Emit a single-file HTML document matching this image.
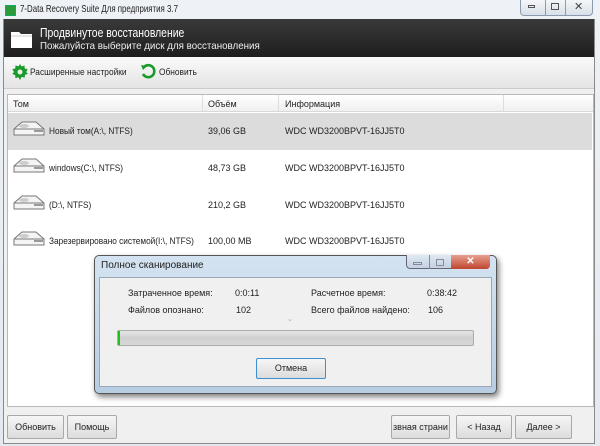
<!DOCTYPE html>
<html><head><meta charset="utf-8"><style>
*{box-sizing:border-box;margin:0;padding:0}
body{width:600px;height:446px;overflow:hidden;background:#dfe6ee;font-family:"Liberation Sans",sans-serif;font-size:11px;color:#222;position:relative}
.a{position:absolute;white-space:nowrap}
.s{transform-origin:0 0}
.btn{position:absolute;border:1px solid #a8a8a8;border-radius:2px;background:linear-gradient(#f6f6f6,#dcdcdc);font-size:9px;text-align:center;line-height:22px;color:#222}
.row{position:absolute;left:8px;width:584px;height:37px;font-size:9px}
.row span{position:absolute;top:13px;white-space:nowrap}
.row span.n{transform:scaleX(.92);transform-origin:0 0}
</style></head><body>
<div class="a" style="left:0;top:0;width:600px;height:446px;background:linear-gradient(#eef2f6,#e3e9ef)"></div>
<div class="a" style="left:5px;top:5px;width:11px;height:11px;background:#2a9a3a;border:1px solid #1a6"></div>
<div class="a s" style="left:20px;top:3px;font-size:10.5px;transform:scaleX(.75)">7-Data Recovery Suite Для предприятия 3.7</div>
<div class="a" style="left:520px;top:0;width:73px;height:16px;border:1px solid #8a9bb0;border-top:none;border-radius:0 0 4px 4px;background:linear-gradient(#f4f6f9,#d9e0e8)"></div>
<div class="a" style="left:545px;top:0;width:1px;height:16px;background:#8a9bb0"></div>
<div class="a" style="left:565px;top:0;width:1px;height:16px;background:#8a9bb0"></div>
<div class="a" style="left:528px;top:5px;width:7px;height:3px;border:1px solid #555"></div>
<div class="a" style="left:551px;top:3px;width:8px;height:7px;border:1px solid #555"></div>
<div class="a" style="left:574px;top:0px;font-size:11px;color:#444">✕</div>
<div class="a" style="left:3px;top:19px;width:592px;height:425px;background:#f0f0f0;border:1px solid #8a8a8a"></div>
<div class="a" style="left:4px;top:19px;width:590px;height:38px;background:linear-gradient(#3a3a3a,#1e1e1e)"></div>
<svg class="a" style="left:10px;top:28px" width="24" height="22"><path d="M1 4h8l2 2h11v14H1z" fill="#fff"/><path d="M1 8h21" stroke="#ccc"/></svg>
<div class="a s" style="left:40px;top:25px;color:#fff;font-size:13px;transform:scaleX(.8)">Продвинутое восстановление</div>
<div class="a s" style="left:40px;top:40px;color:#eee;font-size:10.5px;transform:scaleX(.93)">Пожалуйста выберите диск для восстановления</div>
<div class="a" style="left:4px;top:57px;width:590px;height:32px;background:linear-gradient(#fafafa,#e4e4e4);border-bottom:1px solid #ccc"></div>
<svg class="a" style="left:12px;top:64px" width="16" height="16" viewBox="0 0 16 16"><path d="M8 0l1.5 2.5 3-1 .2 3 3 .8-1.5 2.7L16 10l-3 .8-.3 3-3-1L8 16l-1.6-2.8-3 .9-.2-3L.2 10 2 8 .3 5.2l3-.8.2-3 2.9 1z" fill="#1a9a2a"/><circle cx="8" cy="8" r="2.5" fill="#e8f0e8"/></svg>
<div class="a s" style="left:30px;top:67px;font-size:9.5px;transform:scaleX(.88)">Расширенные настройки</div>
<svg class="a" style="left:140px;top:63px" width="17" height="17" viewBox="0 0 17 17"><path d="M4 4A6 6 0 1 1 3 11" fill="none" stroke="#1a9a2a" stroke-width="2.6"/><path d="M1 2l6 1-4 4z" fill="#1a9a2a"/></svg>
<div class="a s" style="left:159px;top:67px;font-size:9.5px;transform:scaleX(.88)">Обновить</div>
<div class="a" style="left:7px;top:94px;width:587px;height:313px;background:#fff;border:1px solid #b8b8b8"></div>
<div class="a" style="left:8px;top:95px;width:585px;height:17px;background:linear-gradient(#fff,#f0f0f0);border-bottom:1px solid #d8d8d8"></div>
<div class="a" style="left:202px;top:95px;width:1px;height:17px;background:#ddd"></div>
<div class="a" style="left:278px;top:95px;width:1px;height:17px;background:#ddd"></div>
<div class="a" style="left:503px;top:95px;width:1px;height:17px;background:#ddd"></div>
<div class="a" style="left:13px;top:99px;font-size:9px">Том</div>
<div class="a" style="left:208px;top:99px;font-size:9px">Объём</div>
<div class="a" style="left:285px;top:99px;font-size:9px">Информация</div>
<div class="row" style="top:113px;background:#dcdcdc"><span class="n" style="left:41px">Новый том(A:\, NTFS)</span><span style="left:200px">39,06 GB</span><span style="left:277px">WDC WD3200BPVT-16JJ5T0</span></div>
<div class="row" style="top:150px"><span class="n" style="left:41px">windows(C:\, NTFS)</span><span style="left:200px">48,73 GB</span><span style="left:277px">WDC WD3200BPVT-16JJ5T0</span></div>
<div class="row" style="top:187px"><span class="n" style="left:41px">(D:\, NTFS)</span><span style="left:200px">210,2 GB</span><span style="left:277px">WDC WD3200BPVT-16JJ5T0</span></div>
<div class="row" style="top:223px"><span class="n" style="left:41px">Зарезервировано системой(I:\, NTFS)</span><span style="left:200px">100,00 MB</span><span style="left:277px">WDC WD3200BPVT-16JJ5T0</span></div>
<svg class="a" style="left:12px;top:120px" width="36" height="130"><g id="d"><path d="M2 9l8-7h14l8 7v6H2z" fill="#f4f4f4" stroke="#777"/><path d="M2 9h30" stroke="#777"/><ellipse cx="12" cy="6" rx="5" ry="2" fill="#ccc"/><path d="M22 11h9" stroke="#999" stroke-width="2"/></g><use href="#d" y="37"/><use href="#d" y="74"/><use href="#d" y="110"/></svg>
<!-- dialog -->
<div class="a" style="left:94px;top:255px;width:403px;height:139px;border:1px solid #555;border-radius:5px;background:linear-gradient(#d4e3f1,#b8cde2);box-shadow:2px 3px 6px rgba(0,0,0,.5)"></div>
<div class="a" style="left:101px;top:260px;font-size:10px">Полное сканирование</div>
<div class="a" style="left:406px;top:255px;width:84px;height:14px;border:1px solid #667;border-top:none;border-radius:0 0 4px 4px;background:linear-gradient(#dfe8f2,#c2d2e2)"></div>
<div class="a" style="left:429px;top:255px;width:1px;height:14px;background:#889"></div>
<div class="a" style="left:413px;top:262px;width:9px;height:3px;border:1px solid #889"></div>
<div class="a" style="left:436px;top:259px;width:8px;height:7px;border:1px solid #889"></div>
<div class="a" style="left:451px;top:255px;width:39px;height:14px;border-radius:0 0 4px 0;background:linear-gradient(#e8a090,#c0452e);color:#fff;text-align:center;font-size:10px;line-height:13px;font-weight:bold">✕</div>
<div class="a" style="left:99px;top:277px;width:393px;height:110px;background:#f0f0f0;border:1px solid #98a8ba"></div>
<div class="a" style="left:128px;top:288px;font-size:9px">Затраченное время:</div>
<div class="a" style="left:235px;top:288px;font-size:9px">0:0:11</div>
<div class="a" style="left:311px;top:288px;font-size:9px">Расчетное время:</div>
<div class="a" style="left:427px;top:288px;font-size:9px">0:38:42</div>
<div class="a" style="left:128px;top:305px;font-size:9px">Файлов опознано:</div>
<div class="a" style="left:236px;top:305px;font-size:9px">102</div>
<div class="a" style="left:311px;top:305px;font-size:9px">Всего файлов найдено:</div>
<div class="a" style="left:428px;top:305px;font-size:9px">106</div>
<div class="a" style="left:287px;top:315px;font-size:7px;color:#aaa">⌄</div>
<div class="a" style="left:117px;top:330px;width:357px;height:16px;border:1px solid #aaa;border-radius:2px;background:linear-gradient(#e6e6e6,#cfcfcf 50%,#d8d8d8)"></div>
<div class="a" style="left:118px;top:331px;width:2px;height:14px;background:#22c022"></div>
<div class="btn" style="left:256px;top:358px;width:70px;height:21px;border-color:#3c8fd0;line-height:19px">Отмена</div>
<!-- bottom buttons -->
<div class="btn" style="left:7px;top:415px;width:57px;height:24px">Обновить</div>
<div class="btn" style="left:67px;top:415px;width:50px;height:24px">Помощь</div>
<div class="btn" style="left:391px;top:415px;width:59px;height:24px;overflow:hidden;white-space:nowrap">звная страни</div>
<div class="btn" style="left:456px;top:415px;width:56px;height:24px">&lt; Назад</div>
<div class="btn" style="left:515px;top:415px;width:57px;height:24px">Далее &gt;</div>
</body></html>
